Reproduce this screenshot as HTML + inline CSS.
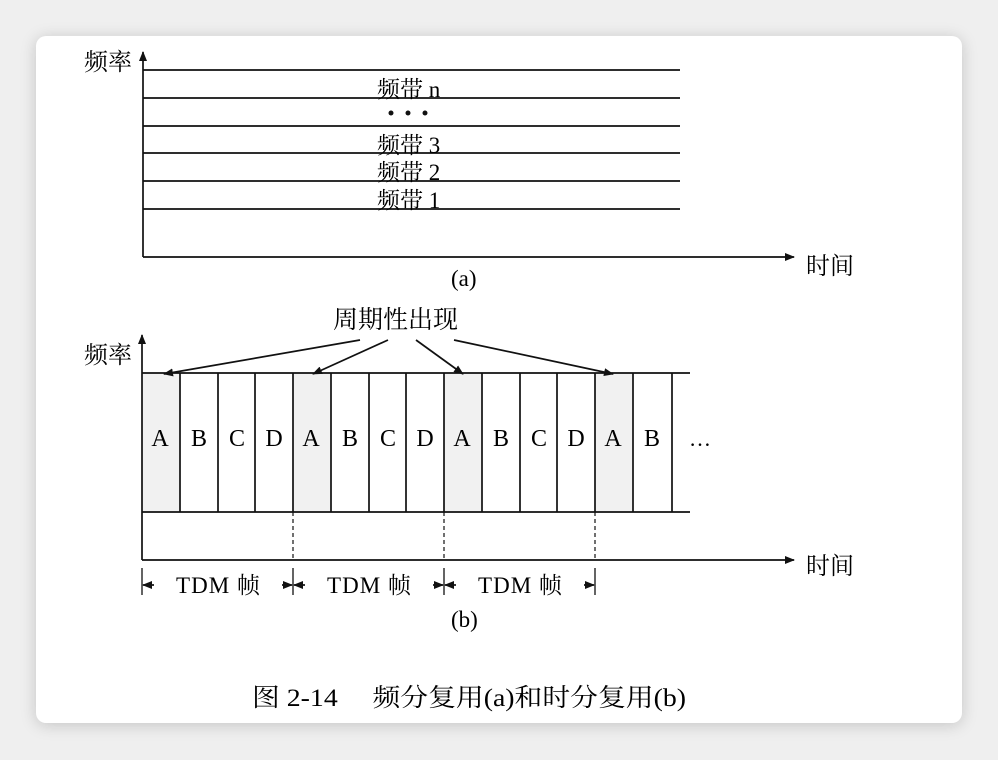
<!DOCTYPE html>
<html><head><meta charset="utf-8"><style>
html,body{margin:0;padding:0;background:#efefef;width:998px;height:760px;overflow:hidden}
.card{position:absolute;left:36px;top:36px;width:926px;height:687px;background:#fff;border-radius:10px;box-shadow:0 2px 16px rgba(0,0,0,.18)}
svg{position:absolute;left:0;top:0}
text{font-family:"Liberation Serif","Noto Serif CJK SC",serif;fill:#000}
</style></head><body>
<div class="card"></div>
<svg width="998" height="760" viewBox="0 0 998 760">
<defs><marker id="ar" markerWidth="10" markerHeight="8" refX="9" refY="4" orient="auto" markerUnits="userSpaceOnUse"><path d="M0,0 L10,4 L0,8 z" fill="#111"/></marker></defs>
<g stroke="#111" stroke-width="1.7" fill="none">
<line x1="143" y1="257" x2="143" y2="52" marker-end="url(#ar)"/>
<line x1="143" y1="257" x2="794" y2="257" marker-end="url(#ar)"/>
<line x1="143" y1="70" x2="680" y2="70"/>
<line x1="143" y1="98" x2="680" y2="98"/>
<line x1="143" y1="126" x2="680" y2="126"/>
<line x1="143" y1="153" x2="680" y2="153"/>
<line x1="143" y1="181" x2="680" y2="181"/>
<line x1="143" y1="209" x2="680" y2="209"/>
</g>
<g fill="#111"><circle cx="391" cy="113" r="2.5"/><circle cx="408" cy="113" r="2.5"/><circle cx="425" cy="113" r="2.5"/></g>
<text x="84" y="70" font-size="24">频率</text>
<text x="377" y="97" font-size="23">频带 n</text>
<text x="377" y="153" font-size="23">频带 3</text>
<text x="377" y="180" font-size="23">频带 2</text>
<text x="377" y="208" font-size="23">频带 1</text>
<text x="806" y="274" font-size="24">时间</text>
<text x="451" y="286" font-size="23">(a)</text>
<g fill="#f1f1f1"><rect x="142" y="373" width="38" height="139"/><rect x="293" y="373" width="38" height="139"/><rect x="444" y="373" width="38" height="139"/><rect x="595" y="373" width="38" height="139"/></g>
<g stroke="#111" stroke-width="1.7" fill="none">
<line x1="142" y1="560" x2="142" y2="335" marker-end="url(#ar)"/>
<line x1="142" y1="560" x2="794" y2="560" marker-end="url(#ar)"/>
<line x1="142" y1="373" x2="690" y2="373"/>
<line x1="142" y1="512" x2="690" y2="512"/>
<path d="M180 373V512M218 373V512M255 373V512M293 373V512M331 373V512M369 373V512M406 373V512M444 373V512M482 373V512M520 373V512M557 373V512M595 373V512M633 373V512M672 373V512"/>
<path d="M293 512V560M444 512V560M595 512V560" stroke-dasharray="4,3" stroke-width="1.2"/>
<path d="M142 568V595M293 568V595M444 568V595M595 568V595" stroke-width="1.3"/>
<line x1="360" y1="340" x2="164" y2="374" marker-end="url(#ar)"/>
<line x1="388" y1="340" x2="313" y2="374" marker-end="url(#ar)"/>
<line x1="416" y1="340" x2="463" y2="374" marker-end="url(#ar)"/>
<line x1="454" y1="340" x2="613" y2="374" marker-end="url(#ar)"/>
<line x1="154" y1="585" x2="143" y2="585" marker-end="url(#ar)"/>
<line x1="282" y1="585" x2="292" y2="585" marker-end="url(#ar)"/>
<line x1="305" y1="585" x2="294" y2="585" marker-end="url(#ar)"/>
<line x1="433" y1="585" x2="443" y2="585" marker-end="url(#ar)"/>
<line x1="456" y1="585" x2="445" y2="585" marker-end="url(#ar)"/>
<line x1="584" y1="585" x2="594" y2="585" marker-end="url(#ar)"/>
</g>
<text x="333" y="328" font-size="25">周期性出现</text>
<text x="84" y="363" font-size="24">频率</text>
<g font-size="24" text-anchor="middle">
<text x="160" y="446">A</text><text x="199" y="446">B</text><text x="237" y="446">C</text><text x="274" y="446">D</text>
<text x="311" y="446">A</text><text x="350" y="446">B</text><text x="388" y="446">C</text><text x="425" y="446">D</text>
<text x="462" y="446">A</text><text x="501" y="446">B</text><text x="539" y="446">C</text><text x="576" y="446">D</text>
<text x="613" y="446">A</text><text x="652" y="446">B</text>
</g>
<text x="689" y="446" font-size="22">…</text>
<text x="806" y="574" font-size="24">时间</text>
<text x="176" y="593" font-size="23" textLength="84">TDM 帧</text>
<text x="327" y="593" font-size="23" textLength="84">TDM 帧</text>
<text x="478" y="593" font-size="23" textLength="84">TDM 帧</text>
<text x="451" y="627" font-size="23">(b)</text>
<text x="252" y="706" font-size="25" textLength="434" lengthAdjust="spacingAndGlyphs">图 2-14　 频分复用(a)和时分复用(b)</text>
</svg>
</body></html>
